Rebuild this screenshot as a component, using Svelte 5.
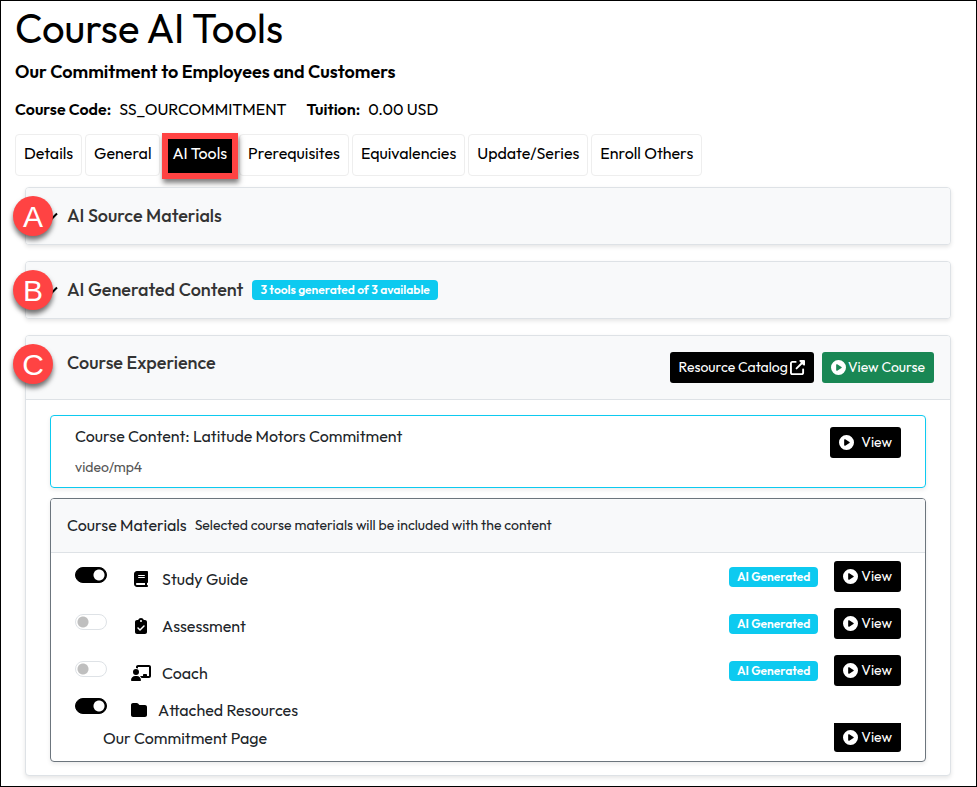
<script>
  const tabs = ['Details', 'General', 'AI Tools', 'Prerequisites', 'Equivalencies', 'Update/Series', 'Enroll Others'];
  let activeTab = $state('AI Tools');

  const materials = $state([
    { id: 'guide', name: 'Study Guide', icon: 'book', on: true },
    { id: 'assessment', name: 'Assessment', icon: 'clipboard', on: false },
    { id: 'coach', name: 'Coach', icon: 'coach', on: false }
  ]);
  let attached = $state(true);

  const icons = {
    play: {
      box: '0 0 512 512',
      d: 'M0 256a256 256 0 1 1 512 0A256 256 0 1 1 0 256zM188.3 147.1c-7.6 4.2-12.3 12.3-12.3 20.9V344c0 8.7 4.7 16.7 12.3 20.9s16.8 4.1 24.3-.5l144-88c7.1-4.4 11.5-12.1 11.5-20.5s-4.4-16.1-11.5-20.5l-144-88c-7.4-4.5-16.7-4.7-24.3-.5z'
    },
    external: {
      box: '0 0 512 512',
      d: 'M352 0c-12.9 0-24.6 7.8-29.6 19.8s-2.2 25.7 6.9 34.9L370.7 96 201.4 265.4c-12.5 12.5-12.5 32.8 0 45.3s32.8 12.5 45.3 0L416 141.3l41.4 41.4c9.2 9.2 22.9 11.9 34.9 6.9s19.8-16.6 19.8-29.6V32c0-17.7-14.3-32-32-32H352zM80 32C35.8 32 0 67.8 0 112V432c0 44.2 35.8 80 80 80H400c44.2 0 80-35.8 80-80V320c0-17.7-14.3-32-32-32s-32 14.3-32 32V432c0 8.8-7.2 16-16 16H80c-8.8 0-16-7.2-16-16V112c0-8.8 7.2-16 16-16H192c17.7 0 32-14.3 32-32s-14.3-32-32-32H80z'
    },
    book: {
      box: '0 0 448 512',
      d: 'M96 0C43 0 0 43 0 96V416c0 53 43 96 96 96H384h32c17.7 0 32-14.3 32-32s-14.3-32-32-32V384c17.7 0 32-14.3 32-32V32c0-17.7-14.3-32-32-32H384 96zm0 384H352v64H96c-17.7 0-32-14.3-32-32s14.3-32 32-32zm32-240c0-8.8 7.2-16 16-16H336c8.8 0 16 7.2 16 16s-7.2 16-16 16H144c-8.8 0-16-7.2-16-16zm16 48H336c8.8 0 16 7.2 16 16s-7.2 16-16 16H144c-8.8 0-16-7.2-16-16s7.2-16 16-16z'
    },
    clipboard: {
      box: '0 0 384 512',
      d: 'M192 0c-41.8 0-77.4 26.7-90.5 64H64C28.7 64 0 92.7 0 128V448c0 35.3 28.7 64 64 64H320c35.3 0 64-28.7 64-64V128c0-35.3-28.7-64-64-64H282.5C269.4 26.7 233.8 0 192 0zm0 64a32 32 0 1 1 0 64 32 32 0 1 1 0-64zM305 273L177 401c-9.4 9.4-24.6 9.4-33.9 0L79 337c-9.4-9.4-9.4-24.6 0-33.9s24.6-9.4 33.9 0l47 47L271 239c9.4-9.4 24.6-9.4 33.9 0s9.4 24.6 0 33.9z'
    },
    coach: {
      box: '0 0 640 512',
      d: 'M160 64c0-35.3 28.7-64 64-64H576c35.3 0 64 28.7 64 64V352c0 35.3-28.7 64-64 64H336.8c-11.8-25.5-29.9-47.5-52.4-64H384V320c0-17.7 14.3-32 32-32h64c17.7 0 32 14.3 32 32v32h64V64L224 64v49.1C205.2 102.2 183.3 96 160 96V64zm0 64a96 96 0 1 1 0 192 96 96 0 1 1 0-192zM133.3 352h53.3C260.3 352 320 411.7 320 485.3c0 14.7-11.9 26.7-26.7 26.7H26.7C11.9 512 0 500.1 0 485.3C0 411.7 59.7 352 133.3 352z'
    },
    folder: {
      box: '0 0 512 512',
      d: 'M64 480H448c35.3 0 64-28.7 64-64V160c0-35.3-28.7-64-64-64H298.5c-17 0-33.3-6.7-45.3-18.7L226.7 50.7c-12-12-28.3-18.7-45.3-18.7H64C28.7 32 0 60.7 0 96V416c0 35.3 28.7 64 64 64z'
    }
  };
</script>

{#snippet icon(name)}
  <svg class="icon" viewBox={icons[name].box} aria-hidden="true"><path d={icons[name].d} /></svg>
{/snippet}

{#snippet chevron()}
  <svg class="chevron" viewBox="0 0 12 8" aria-hidden="true"><path d="M1 1.5l5 5 5-5" /></svg>
{/snippet}

<main class="page">
  <h1>Course AI Tools</h1>
  <h2>Our Commitment to Employees and Customers</h2>
  <dl class="meta">
    <div><dt>Course Code:</dt><dd>SS_OURCOMMITMENT</dd></div>
    <div><dt>Tuition:</dt><dd>0.00 USD</dd></div>
  </dl>

  <nav class="tabs">
    {#each tabs as tab}
      <button class="tab" class:active={tab === activeTab} onclick={() => (activeTab = tab)}>{tab}</button>
    {/each}
  </nav>

  <section class="card">
    <span class="marker">A</span>
    <header class="card-head">
      <button class="toggle">{@render chevron()}<span>AI Source Materials</span></button>
    </header>
  </section>

  <section class="card">
    <span class="marker">B</span>
    <header class="card-head">
      <button class="toggle">{@render chevron()}<span>AI Generated Content</span></button>
      <span class="badge">3 tools generated of 3 available</span>
    </header>
  </section>

  <section class="card">
    <span class="marker">C</span>
    <header class="card-head experience">
      <h3>Course Experience</h3>
      <div class="actions">
        <button class="btn">Resource Catalog {@render icon('external')}</button>
        <button class="btn green">{@render icon('play')} View Course</button>
      </div>
    </header>

    <div class="card-body">
      <article class="content">
        <div>
          <p class="content-title">Course Content: Latitude Motors Commitment</p>
          <p class="content-type">video/mp4</p>
        </div>
        <button class="btn wide">{@render icon('play')} View</button>
      </article>

      <div class="materials">
        <header class="materials-head">
          <span class="materials-title">Course Materials</span>
          <span class="materials-note">Selected course materials will be included with the content</span>
        </header>

        {#each materials as item (item.id)}
          <div class="row">
            <input class="switch" type="checkbox" id={item.id} bind:checked={item.on} />
            <label for={item.id}><span class="icon-cell">{@render icon(item.icon)}</span>{item.name}</label>
            <span class="badge">AI Generated</span>
            <button class="btn">{@render icon('play')} View</button>
          </div>
        {/each}

        <div class="row attached">
          <input class="switch" type="checkbox" id="attached" bind:checked={attached} />
          <label for="attached"><span class="icon-cell">{@render icon('folder')}</span>Attached Resources</label>
        </div>
        <div class="row resource">
          <span>Our Commitment Page</span>
          <button class="btn">{@render icon('play')} View</button>
        </div>
      </div>
    </div>
  </section>
</main>

<style>
  :global(body) {
    margin: 0;
    background: #fff;
  }

  .page {
    box-sizing: border-box;
    min-height: 100vh;
    padding: 3px 25px 10px 14px;
    border: 1px solid #000;
    font-family: Outfit, Lato, sans-serif;
    font-size: 16px;
    line-height: 24px;
    color: #212529;
  }

  h1, h2, h3, p, dl, dd {
    margin: 0;
  }

  h1 {
    font-size: 40px;
    font-weight: 400;
    line-height: 48px;
    color: #000;
  }

  h2 {
    margin-top: 8px;
    font-size: 18px;
    font-weight: 600;
    color: #000;
  }

  .meta {
    display: flex;
    gap: 20px;
    margin-top: 13px;
    color: #000;
  }

  .meta div {
    display: flex;
    gap: 8px;
  }

  dt {
    font-weight: 600;
  }

  button {
    font: inherit;
    cursor: pointer;
  }

  .tabs {
    display: flex;
    gap: 3px;
    margin-top: 13px;
  }

  .tab {
    height: 42px;
    padding: 0 8px 4px;
    border: 1px solid #eee;
    border-radius: 4px;
    background: #fff;
    color: #000;
  }

  .tab.active {
    position: relative;
    background: #000;
    border-color: #000;
    color: #fff;
  }

  /* callout frame around the current tab */
  .tab.active::after {
    content: '';
    position: absolute;
    inset: -2px -3px -4px -2px;
    border: 6px solid #ff4343;
    box-shadow: 1px 4px 5px rgba(0, 0, 0, 0.5);
  }

  .card {
    position: relative;
    margin: 16px 0 0 10px;
    border: 1px solid #dee2e6;
    border-radius: 4px;
    background: #fff;
    box-shadow: 0 2px 4px rgba(0, 0, 0, 0.1);
  }

  .tabs + .card {
    margin-top: 11px;
  }

  .card-head {
    display: flex;
    align-items: center;
    gap: 9px;
    min-height: 56px;
    padding: 0 16px;
    border-radius: 3px;
    background: #f8f9fa;
  }

  .toggle {
    display: flex;
    align-items: center;
    gap: 9px;
    padding: 0;
    border: 0;
    background: none;
  }

  .toggle, h3 {
    font-size: 18px;
    font-weight: 500;
    color: #333;
  }

  .chevron {
    width: 12px;
    height: 8px;
    margin-left: 4px;
    fill: none;
    stroke: #000;
    stroke-width: 2;
  }

  .marker {
    position: absolute;
    top: 8px;
    left: -13px;
    z-index: 1;
    width: 40px;
    height: 40px;
    border-radius: 50%;
    background: #ff4343;
    box-shadow: 0 4px 5px rgba(0, 0, 0, 0.55);
    color: #fff;
    font: 30px/42px "Liberation Sans", Arial, sans-serif;
    text-align: center;
  }

  .badge {
    padding: 0 8px;
    border-radius: 4px;
    background: #0dcaf0;
    color: #fff;
    font-size: 12px;
    font-weight: 600;
    line-height: 20px;
  }

  .experience {
    min-height: 63px;
    border-bottom: 1px solid #dee2e6;
    border-radius: 3px 3px 0 0;
  }

  h3 {
    flex: 1;
    padding: 0 0 10px 25px;
  }

  .actions {
    display: flex;
    gap: 8px;
  }

  .btn {
    display: flex;
    flex-shrink: 0;
    align-items: center;
    justify-content: center;
    gap: 2px;
    height: 31px;
    padding: 0 9px;
    border: 0;
    border-radius: 3px;
    background: #000;
    color: #fff;
    font-size: 14px;
    line-height: 21px;
  }

  .green {
    background: #198754;
  }

  .wide {
    gap: 7px;
  }

  .icon {
    height: 16px;
    fill: currentColor;
  }

  .btn .icon {
    height: 15px;
  }

  .card-body {
    padding: 15px 24px 13px;
  }

  .content {
    display: flex;
    align-items: flex-start;
    justify-content: space-between;
    padding: 11px 24px 8px;
    border: 1px solid #0dcaf0;
    border-radius: 4px;
    box-shadow: 0 2px 4px rgba(0, 0, 0, 0.08);
  }

  .content-title {
    line-height: 18px;
  }

  .content-type {
    margin-top: 10px;
    color: #555;
    font-size: 14px;
  }

  .materials {
    margin-top: 10px;
    padding-bottom: 9px;
    border: 1px solid #6c757d;
    border-radius: 4px;
    box-shadow: 0 2px 4px rgba(0, 0, 0, 0.08);
  }

  .materials-head {
    display: flex;
    align-items: center;
    box-sizing: border-box;
    gap: 8px;
    height: 54px;
    padding: 0 16px 2px;
    border-bottom: 1px solid #dee2e6;
    border-radius: 3px 3px 0 0;
    background: #f8f9fa;
  }

  .materials-note {
    font-size: 14px;
  }

  .row {
    display: flex;
    align-items: center;
    height: 47px;
    padding: 0 24px;
  }

  .row label {
    display: flex;
    flex: 1;
    align-items: center;
    padding-top: 4px;
  }

  .row .btn {
    gap: 3px;
    margin-left: 16px;
  }

  .icon-cell {
    display: flex;
    justify-content: center;
    width: 20px;
    margin: 0 11px 0 24px;
    color: #000;
  }

  .switch {
    appearance: none;
    box-sizing: border-box;
    width: 32px;
    height: 16px;
    margin: 0 0 3px;
    border: 1px solid #dee2e6;
    border-radius: 8px;
    background: radial-gradient(circle at 7px 7px, #bfbfbf 5px, transparent 6px) #fff;
  }

  .switch:checked {
    border-color: #000;
    background: radial-gradient(circle at 23px 7px, #fff 5px, transparent 6px) #000;
  }

  .row.attached {
    height: 27px;
  }

  .attached .icon-cell {
    width: 16px;
  }

  .row.resource {
    justify-content: space-between;
    height: 29px;
    margin-top: 2px;
    padding-left: 52px;
  }

  .resource .btn {
    height: 29px;
    border-radius: 0 0 3px 3px;
  }
</style>
